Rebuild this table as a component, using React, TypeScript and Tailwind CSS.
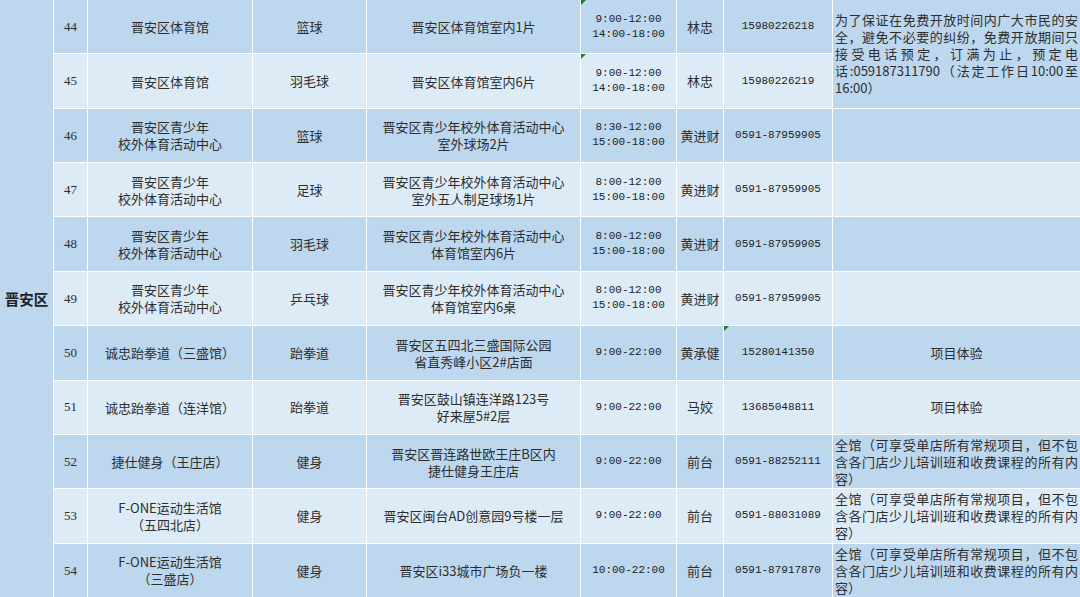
import React from 'react';

type Row = {
	no: number;
	name: string[];
	sport: string;
	place: string[];
	time: string[];
	contact: string;
	phone: string;
	timeFlag?: boolean;
	phoneFlag?: boolean;
};

const rows: Row[] = [
	{ no: 44, name: ['晋安区体育馆'], sport: '篮球', place: ['晋安区体育馆室内1片'], time: ['9:00-12:00', '14:00-18:00'], contact: '林忠', phone: '15980226218', timeFlag: true },
	{ no: 45, name: ['晋安区体育馆'], sport: '羽毛球', place: ['晋安区体育馆室内6片'], time: ['9:00-12:00', '14:00-18:00'], contact: '林忠', phone: '15980226219', timeFlag: true },
	{ no: 46, name: ['晋安区青少年', '校外体育活动中心'], sport: '篮球', place: ['晋安区青少年校外体育活动中心', '室外球场2片'], time: ['8:30-12:00', '15:00-18:00'], contact: '黄进财', phone: '0591-87959905' },
	{ no: 47, name: ['晋安区青少年', '校外体育活动中心'], sport: '足球', place: ['晋安区青少年校外体育活动中心', '室外五人制足球场1片'], time: ['8:00-12:00', '15:00-18:00'], contact: '黄进财', phone: '0591-87959905' },
	{ no: 48, name: ['晋安区青少年', '校外体育活动中心'], sport: '羽毛球', place: ['晋安区青少年校外体育活动中心', '体育馆室内6片'], time: ['8:00-12:00', '15:00-18:00'], contact: '黄进财', phone: '0591-87959905' },
	{ no: 49, name: ['晋安区青少年', '校外体育活动中心'], sport: '乒乓球', place: ['晋安区青少年校外体育活动中心', '体育馆室内6桌'], time: ['8:00-12:00', '15:00-18:00'], contact: '黄进财', phone: '0591-87959905' },
	{ no: 50, name: ['诚忠跆拳道（三盛馆）'], sport: '跆拳道', place: ['晋安区五四北三盛国际公园', '省直秀峰小区2#店面'], time: ['9:00-22:00'], contact: '黄承健', phone: '15280141350', phoneFlag: true },
	{ no: 51, name: ['诚忠跆拳道（连洋馆）'], sport: '跆拳道', place: ['晋安区鼓山镇连洋路123号', '好来屋5#2层'], time: ['9:00-22:00'], contact: '马姣', phone: '13685048811' },
	{ no: 52, name: ['捷仕健身（王庄店）'], sport: '健身', place: ['晋安区晋连路世欧王庄B区内', '捷仕健身王庄店'], time: ['9:00-22:00'], contact: '前台', phone: '0591-88252111' },
	{ no: 53, name: ['F-ONE运动生活馆', '（五四北店）'], sport: '健身', place: ['晋安区闽台AD创意园9号楼一层'], time: ['9:00-22:00'], contact: '前台', phone: '0591-88031089' },
	{ no: 54, name: ['F-ONE运动生活馆', '（三盛店）'], sport: '健身', place: ['晋安区i33城市广场负一楼'], time: ['10:00-22:00'], contact: '前台', phone: '0591-87917870' },
];

const dark = 'bg-[#bdd7ee]';
const light = 'bg-[#ddebf7]';

const fullNote = ['全馆（可享受单店所有常规项目，但不包', '含各门店少儿培训班和收费课程的所有内'];

function Flag() {
	return (
		<span className="absolute left-0 top-0 h-0 w-0 border-t-[5px] border-r-[5px] border-t-[#217a2e] border-r-transparent" />
	);
}

function Lines({ lines, mono }: { lines: string[]; mono?: boolean }) {
	return (
		<div
			className={
				mono
					? "font-['Liberation_Mono','Noto_Sans_CJK_SC',monospace] text-[11px] leading-[15px] text-[#222]"
					: 'leading-[17px]'
			}
		>
			{lines.map((l, i) => (
				<div key={i}>{l}</div>
			))}
		</div>
	);
}

function Justified({ lines, last }: { lines: string[]; last: string }) {
	return (
		<div className="w-full px-[2px] text-[13px] leading-[17px]">
			{lines.map((l, i) => (
				<div key={i} className="text-justify [text-align-last:justify]">
					{l}
				</div>
			))}
			<div>{last}</div>
		</div>
	);
}

function Note({ row, bg }: { row: Row; bg: string }) {
	if (row.no === 45) return null;
	if (row.no === 44) {
		return (
			<div className={`${dark} row-span-2 flex items-center`}>
				<Justified
					lines={[
						'为了保证在免费开放时间内广大市民的安',
						'全，避免不必要的纠纷，免费开放期间只',
						'接受电话预定，订满为止，预定电',
						'话:059187311790（法定工作日10:00至',
					]}
					last="16:00）"
				/>
			</div>
		);
	}
	if (row.no === 50 || row.no === 51) {
		return <div className={`${bg} flex items-center justify-center`}>项目体验</div>;
	}
	if (row.no >= 52) {
		return (
			<div className={`${bg} flex items-center`}>
				<Justified lines={fullNote} last="容）" />
			</div>
		);
	}
	return <div className={bg} />;
}

export default function App() {
	const cell = 'flex items-center justify-center text-center';
	return (
		<div className="h-[597px] w-[1080px] overflow-hidden bg-white font-['Noto_Sans_CJK_SC',sans-serif] text-[13px] text-[#2e2e2e]">
			<div className="grid h-[597px] grid-cols-[53px_33px_164px_113px_213px_95px_46px_108px_1fr] grid-rows-[repeat(11,1fr)] gap-px">
				<div className={`${dark} row-span-11 flex items-center justify-center text-[14.5px] font-bold text-[#222]`}>
					晋安区
				</div>
				{rows.map((r, i) => {
					const bg = i % 2 === 0 ? dark : light;
					return (
						<React.Fragment key={r.no}>
							<div className={`${bg} ${cell} font-['Liberation_Serif',serif] text-[13px]`}>{r.no}</div>
							<div className={`${bg} ${cell}`}>
								<Lines lines={r.name} />
							</div>
							<div className={`${bg} ${cell}`}>{r.sport}</div>
							<div className={`${bg} ${cell}`}>
								<Lines lines={r.place} />
							</div>
							<div className={`${bg} ${cell} relative`}>
								{r.timeFlag && <Flag />}
								<Lines lines={r.time} mono />
							</div>
							<div className={`${bg} ${cell}`}>{r.contact}</div>
							<div className={`${bg} ${cell} relative`}>
								{r.phoneFlag && <Flag />}
								<Lines lines={[r.phone]} mono />
							</div>
							<Note row={r} bg={bg} />
						</React.Fragment>
					);
				})}
			</div>
		</div>
	);
}
